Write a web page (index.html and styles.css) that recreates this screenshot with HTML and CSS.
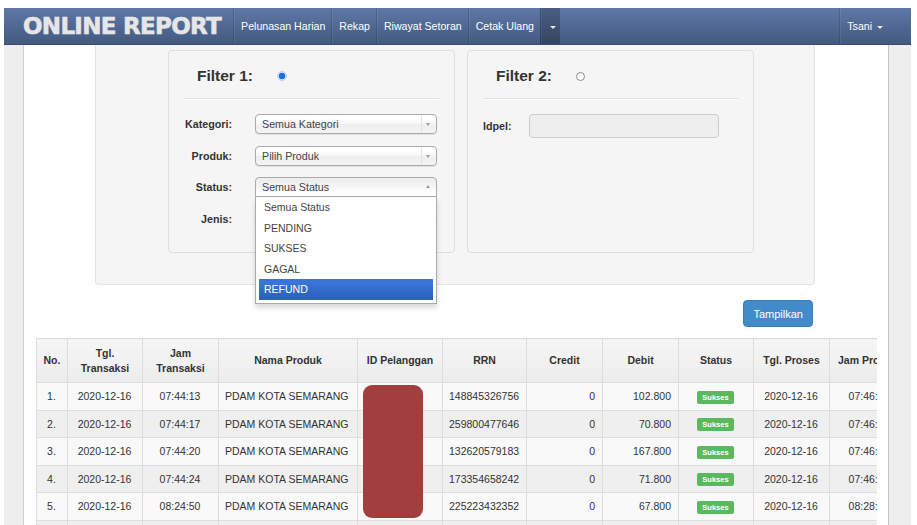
FILE: index.html
```html
<!DOCTYPE html>
<html lang="id">
<head>
    <meta charset="UTF-8">
    <meta name="viewport" content="width=device-width, initial-scale=1.0">
    <title>Online Report</title>
    <link rel="stylesheet" href="styles.css">
</head>
<body>
<div class="page">
    <!-- Top navigation -->
    <div class="navbar">
        <a class="brand" href="#">ONLINE REPORT</a>
        <ul class="nav">
            <li><a href="#">Pelunasan Harian</a></li>
            <li><a href="#">Rekap</a></li>
            <li><a href="#">Riwayat Setoran</a></li>
            <li><a href="#">Cetak Ulang</a></li>
            <li class="toggle"><a href="#"><span class="caret"></span></a></li>
        </ul>
        <ul class="nav nav-right">
            <li><a href="#">Tsani <span class="caret"></span></a></li>
        </ul>
    </div>

    <div class="content">
        <!-- Filters -->
        <div class="well">
            <div class="panel">
                <div class="panel-title">Filter 1: <span class="radio checked"></span></div>
                <hr>
                <div class="form-rows">
                    <div class="form-row">
                        <label>Kategori:</label>
                        <div class="chosen"><a class="chosen-single"><span>Semua Kategori</span><b></b></a></div>
                    </div>
                    <div class="form-row">
                        <label>Produk:</label>
                        <div class="chosen"><a class="chosen-single"><span>Pilih Produk</span><b></b></a></div>
                    </div>
                    <div class="form-row">
                        <label>Status:</label>
                        <div class="chosen open">
                            <a class="chosen-single"><span>Semua Status</span><b></b></a>
                            <div class="chosen-drop">
                                <ul>
                                    <li>Semua Status</li>
                                    <li>PENDING</li>
                                    <li>SUKSES</li>
                                    <li>GAGAL</li>
                                    <li class="highlighted">REFUND</li>
                                </ul>
                            </div>
                        </div>
                    </div>
                    <div class="form-row">
                        <label>Jenis:</label>
                        <div class="chosen"><a class="chosen-single"><span></span><b></b></a></div>
                    </div>
                </div>
            </div>

            <div class="panel">
                <div class="panel-title">Filter 2: <span class="radio"></span></div>
                <hr>
                <div class="form-row idpel">
                    <label>Idpel:</label>
                    <input type="text" disabled>
                </div>
            </div>
        </div>

        <div class="actions">
            <button type="button" class="btn-primary">Tampilkan</button>
        </div>

        <!-- Report table -->
        <div class="table-wrap">
            <table class="report">
                <colgroup>
                    <col style="width:31px"><col style="width:75px"><col style="width:76px">
                    <col style="width:139px"><col style="width:85px"><col style="width:84px">
                    <col style="width:76px"><col style="width:76px"><col style="width:75px">
                    <col style="width:76px"><col style="width:80px">
                </colgroup>
                <thead>
                    <tr>
                        <th>No.</th>
                        <th>Tgl.<br>Transaksi</th>
                        <th>Jam<br>Transaksi</th>
                        <th>Nama Produk</th>
                        <th>ID Pelanggan</th>
                        <th>RRN</th>
                        <th>Credit</th>
                        <th>Debit</th>
                        <th>Status</th>
                        <th>Tgl. Proses</th>
                        <th class="left">Jam Proses</th>
                    </tr>
                </thead>
                <tbody>
                    <tr>
                        <td class="center">1.</td><td class="center">2020-12-16</td><td class="center">07:44:13</td>
                        <td>PDAM KOTA SEMARANG</td><td>0</td><td>148845326756</td>
                        <td class="right">0</td><td class="right">102.800</td>
                        <td class="center"><span class="label-success">Sukses</span></td>
                        <td class="center">2020-12-16</td><td class="center">07:46:21</td>
                    </tr>
                    <tr>
                        <td class="center">2.</td><td class="center">2020-12-16</td><td class="center">07:44:17</td>
                        <td>PDAM KOTA SEMARANG</td><td>0</td><td>259800477646</td>
                        <td class="right">0</td><td class="right">70.800</td>
                        <td class="center"><span class="label-success">Sukses</span></td>
                        <td class="center">2020-12-16</td><td class="center">07:46:24</td>
                    </tr>
                    <tr>
                        <td class="center">3.</td><td class="center">2020-12-16</td><td class="center">07:44:20</td>
                        <td>PDAM KOTA SEMARANG</td><td>0</td><td>132620579183</td>
                        <td class="right">0</td><td class="right">167.800</td>
                        <td class="center"><span class="label-success">Sukses</span></td>
                        <td class="center">2020-12-16</td><td class="center">07:46:28</td>
                    </tr>
                    <tr>
                        <td class="center">4.</td><td class="center">2020-12-16</td><td class="center">07:44:24</td>
                        <td>PDAM KOTA SEMARANG</td><td>0</td><td>173354658242</td>
                        <td class="right">0</td><td class="right">71.800</td>
                        <td class="center"><span class="label-success">Sukses</span></td>
                        <td class="center">2020-12-16</td><td class="center">07:46:31</td>
                    </tr>
                    <tr>
                        <td class="center">5.</td><td class="center">2020-12-16</td><td class="center">08:24:50</td>
                        <td>PDAM KOTA SEMARANG</td><td>0</td><td>225223432352</td>
                        <td class="right">0</td><td class="right">67.800</td>
                        <td class="center"><span class="label-success">Sukses</span></td>
                        <td class="center">2020-12-16</td><td class="center">08:28:02</td>
                    </tr>
                    <tr>
                        <td class="center">6.</td><td class="center">2020-12-16</td><td class="center">08:31:05</td>
                        <td>PDAM KOTA SEMARANG</td><td>0</td><td>219903345871</td>
                        <td class="right">0</td><td class="right">54.800</td>
                        <td class="center"><span class="label-success">Sukses</span></td>
                        <td class="center">2020-12-16</td><td class="center">08:33:40</td>
                    </tr>
                </tbody>
            </table>
            <!-- ID Pelanggan blurred out -->
            <div class="redact"></div>
        </div>
    </div>
</div>
</body>
</html>
```

FILE: styles.css
```css
html {
    background: #fff;
}
body {
    margin: 0;
    padding: 8px 6px 0 4px;
    font-family: "Liberation Sans", Arial, sans-serif;
    color: #333;
}
.page {
    display: flex;
    flex-direction: column;
    height: calc(100vh - 8px);
    background: #eee;
    overflow: hidden;
}

/* navbar */
.navbar {
    display: flex;
    align-items: stretch;
    height: 37px;
    flex-shrink: 0;
    background: linear-gradient(to bottom, #5e79a6, #43597f);
    border-bottom: 1px solid #3a4d6e;
    box-sizing: border-box;
}
.brand {
    padding-left: 19px;
    margin-right: 12px;
    line-height: 37px;
    font-family: "DejaVu Sans", sans-serif;
    font-weight: bold;
    font-size: 23px;
    letter-spacing: -0.7px;
    color: #e6e6e6;
    -webkit-text-stroke: 0.6px #e6e6e6;
    text-decoration: none;
}
.nav {
    display: flex;
    list-style: none;
    margin: 0;
    padding: 0;
}
.nav li {
    border-left: 1px solid rgba(0, 0, 0, 0.14);
    box-shadow: inset 1px 0 rgba(255, 255, 255, 0.07);
}
.nav a {
    display: block;
    padding: 0 6px 0 7px;
    line-height: 36px;
    font-size: 10.6px;
    color: #fff;
    text-decoration: none;
}
.nav .toggle {
    background: rgba(0, 0, 0, 0.22);
}
.nav .toggle a {
    width: 6px;
}
.nav-right {
    margin-left: auto;
    margin-right: 22px;
}
.caret {
    display: inline-block;
    width: 0;
    height: 0;
    vertical-align: middle;
    border-top: 3px solid #e8e8e8;
    border-left: 3px solid transparent;
    border-right: 3px solid transparent;
    margin-left: 2px;
}

/* content area */
.content {
    flex: 1;
    margin: 0 22px 0 19px;
    background: #fff;
    border-left: 1px solid #cfcfcf;
    border-right: 1px solid #c4c4c4;
    overflow: hidden;
}
.well {
    display: flex;
    gap: 12px;
    margin: 0 73px 0 71px;
    padding: 5px 0 31px 72px;
    background: #f5f5f5;
    border: 1px solid #e3e3e3;
    border-top: none;
    border-radius: 0 0 4px 4px;
}
.panel {
    width: 287px;
    height: 203px;
    box-sizing: border-box;
    padding: 14px 15px;
    background: #f5f5f5;
    border: 1px solid #dedede;
    border-radius: 4px;
}
.panel-title {
    display: flex;
    align-items: center;
    height: 22px;
    padding-left: 13px;
    font-size: 15.5px;
    font-weight: bold;
    color: #333;
}
.radio {
    display: inline-block;
    width: 9px;
    height: 9px;
    margin-left: 24px;
    border-radius: 50%;
    border: 1px solid #8a8a8a;
    background: #fff;
    box-sizing: border-box;
}
.radio.checked {
    width: 10px;
    height: 10px;
    border: 1px solid #b9cdef;
    background: radial-gradient(circle, #1b6fe3 0, #1b6fe3 3px, #d8e5f9 3.6px);
}
hr {
    margin: 11px 0 0;
    border: 0;
    border-top: 1px solid #e2e2e2;
    border-bottom: 1px solid #fafafa;
}

.form-rows {
    display: flex;
    flex-direction: column;
    gap: 11.5px;
    margin-top: 14px;
}
.form-row {
    display: flex;
    align-items: center;
    height: 20px;
}
.form-row label {
    width: 48px;
    margin-right: 23px;
    text-align: right;
    font-size: 10.7px;
    font-weight: bold;
    color: #333;
}

/* chosen style selects */
.chosen {
    position: relative;
    width: 182px;
    height: 20px;
}
.chosen-single {
    display: block;
    position: relative;
    height: 20px;
    box-sizing: border-box;
    padding-left: 6px;
    line-height: 18px;
    font-size: 10.7px;
    color: #444;
    background: linear-gradient(#fff 20%, #f6f6f6 50%, #eee 52%, #f4f4f4 100%);
    border: 1px solid #aaa;
    border-radius: 4px;
    box-shadow: 0 1px 1px rgba(0, 0, 0, 0.08);
}
.chosen-single b {
    position: absolute;
    top: 0;
    right: 0;
    width: 14px;
    height: 100%;
    border-left: 1px solid #e2e2e2;
}
.chosen-single b::after {
    content: "";
    position: absolute;
    left: 4px;
    top: 8px;
    border-top: 3px solid #999;
    border-left: 2.5px solid transparent;
    border-right: 2.5px solid transparent;
}
.chosen.open .chosen-single {
    background: linear-gradient(#eee 20%, #fff 80%);
    border-radius: 4px 4px 0 0;
    box-shadow: none;
}
.chosen.open .chosen-single b {
    border-left: none;
}
.chosen.open .chosen-single b::after {
    top: 7px;
    border-top: none;
    border-bottom: 3px solid #999;
}
.chosen-drop {
    position: absolute;
    top: 20px;
    left: 0;
    right: 0;
    z-index: 5;
    background: #fff;
    border: 1px solid #aaa;
    border-top: none;
    box-shadow: 0 4px 5px rgba(0, 0, 0, 0.15);
}
.chosen-drop ul {
    list-style: none;
    margin: 0;
    padding: 0 3px 3px 3px;
}
.chosen-drop li {
    padding: 3px 5px;
    line-height: 14.5px;
    font-size: 10.5px;
    color: #444;
}
.chosen-drop li.highlighted {
    background: linear-gradient(#3875d7 20%, #2a62bc 90%);
    color: #fff;
}

.idpel {
    margin-top: 16px;
}
.idpel label {
    width: 46px;
    margin-right: 0;
    text-align: left;
}
.idpel input {
    width: 190px;
    height: 24px;
    box-sizing: border-box;
    background: #eee;
    border: 1px solid #ccc;
    border-radius: 4px;
}

/* button */
.actions {
    display: flex;
    justify-content: flex-end;
    margin-top: 15px;
    padding-right: 75px;
}
.btn-primary {
    height: 27px;
    padding: 0 9px;
    font-family: "Liberation Sans", Arial, sans-serif;
    font-size: 11px;
    color: #fff;
    background: #428bca;
    border: 1px solid #357ebd;
    border-radius: 4px;
}

/* table */
.table-wrap {
    position: relative;
    margin: 11px 11px 0 12px;
    overflow: hidden;
}
.report {
    width: 873px;
    table-layout: fixed;
    border-collapse: collapse;
    font-size: 10.5px;
    color: #333;
}
.report th,
.report td {
    border: 1px solid #ddd;
    white-space: nowrap;
    overflow: hidden;
}
.report th {
    padding: 6.5px 6px;
    line-height: 15px;
    font-weight: bold;
    text-align: center;
    background: linear-gradient(#f6f6f6, #ececec);
}
.report td {
    padding: 6px 7px 5.5px 6px;
    line-height: 15px;
}
.report tbody tr:nth-child(odd) td {
    background: #f9f9f9;
}
.report tbody tr:nth-child(even) td {
    background: #efefef;
}
.report .center {
    text-align: center;
}
.report .right {
    text-align: right;
}
.report .left {
    text-align: left;
    padding-left: 8px;
}
.label-success {
    display: inline-block;
    padding: 2px 5px;
    line-height: 9px;
    font-size: 7.5px;
    font-weight: bold;
    color: #fff;
    background: #5cb85c;
    border-radius: 2px;
    vertical-align: middle;
}
.redact {
    position: absolute;
    left: 327px;
    top: 47px;
    width: 60px;
    height: 133px;
    background: #a13e3e;
    border-radius: 9px;
}
```
